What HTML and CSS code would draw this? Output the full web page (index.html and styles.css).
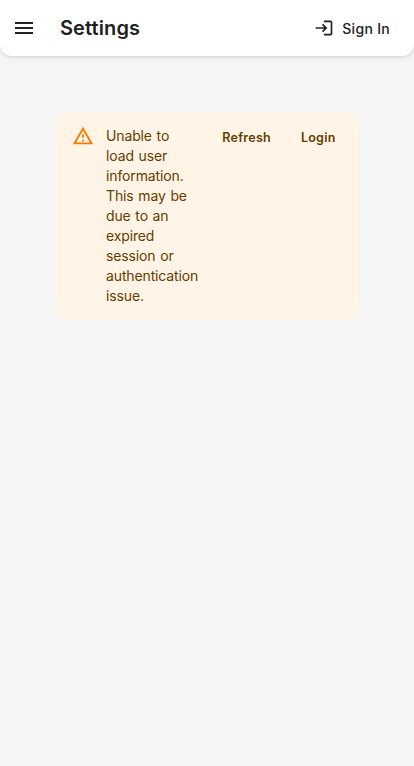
FILE: index.html
```html
<!DOCTYPE html>
<html lang="en">
<head>
<meta charset="utf-8">
<title>Settings</title>
<link rel="stylesheet" href="styles.css">
</head>
<body>
<header class="app-bar">
  <button class="menu-button" aria-label="Menu">
    <svg class="icon" viewBox="0 0 24 24"><path d="M3 18h18v-2H3zm0-5h18v-2H3zm0-7v2h18V6z"/></svg>
  </button>
  <h1 class="title">Settings</h1>
  <button class="sign-in">
    <svg class="icon-small" viewBox="0 0 24 24"><path d="M11 7 9.600 8.400l2.600 2.600H2v2h10.200l-2.600 2.600L11 17l5-5zm9 12h-8v2h8c1.100 0 2-.9 2-2V5c0-1.100-.9-2-2-2h-8v2h8z"/></svg>
    <span>Sign In</span>
  </button>
</header>
<main class="content">
  <div class="alert" role="alert">
    <div class="alert-icon">
      <svg viewBox="0 0 24 24"><path d="M12 5.990L19.530 19H4.470L12 5.990M12 2L1 21h22L12 2zm1 14h-2v2h2v-2zm0-6h-2v4h2v-4z"/></svg>
    </div>
    <div class="alert-message">Unable to load user information. This may be due to an expired session or authentication issue.</div>
    <div class="alert-actions">
      <button class="action">Refresh</button>
      <button class="action">Login</button>
    </div>
  </div>
</main>
</body>
</html>
```

FILE: styles.css
```css
* { box-sizing: border-box; }

body {
  margin: 0;
  min-height: 100vh;
  background: #f5f5f5;
  color: #212121;
  font-family: Inter, sans-serif;
}

button {
  border: 0;
  padding: 0;
  background: none;
  color: inherit;
  font: inherit;
}

svg { display: block; fill: currentColor; }

.app-bar {
  display: flex;
  align-items: center;
  height: 56px;
  padding: 0 24px 0 12px;
  background: #fff;
  border-radius: 0 0 12px 12px;
  box-shadow: 0 1px 4px rgba(0, 0, 0, 0.15);
}

.icon { width: 24px; height: 24px; }

.title {
  margin: 0 auto 0 24px;
  font-size: 20px;
  font-weight: 600;
  line-height: 32px;
  letter-spacing: 0.1px;
}

.sign-in {
  display: flex;
  align-items: center;
  gap: 8px;
  font-size: 14px;
  font-weight: 500;
  letter-spacing: 0.3px;
}

.icon-small { width: 20px; height: 20px; }

.content { padding: 56px; }

.alert {
  display: flex;
  padding: 6px 16px;
  background: #fff4e5;
  color: #663c00;
  border-radius: 12px;
}

.alert-icon {
  flex: none;
  padding: 7px 0;
  margin-right: 12px;
  color: #f57c00;
}

.alert-icon svg { width: 22px; height: 22px; }

.alert-message {
  width: 92px;
  padding: 8px 0;
  font-size: 14px;
  line-height: 20px;
  letter-spacing: -0.13px;
  word-spacing: 0.9px;
}

.alert-actions {
  display: flex;
  align-items: flex-start;
  gap: 20px;
  margin-left: auto;
  padding: 5px 1.4px 0 15px;
}

.action {
  padding: 4px 5px;
  font-size: 12.5px;
  font-weight: 600;
  line-height: 22px;
  letter-spacing: 0.25px;
}
```
